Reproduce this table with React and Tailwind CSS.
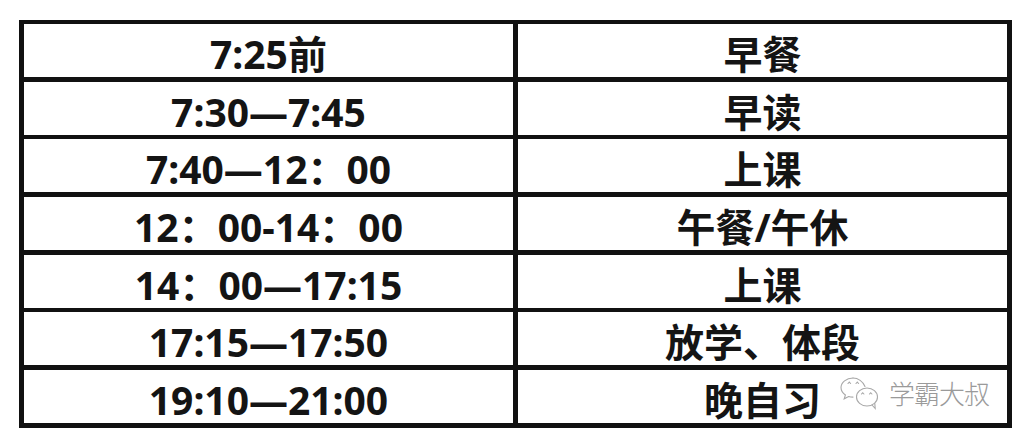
import React from "react";

const rows = [
  ["7:25前", "早餐"],
  ["7:30—7:45", "早读"],
  ["7:40—12：00", "上课"],
  ["12：00-14：00", "午餐/午休"],
  ["14：00—17:15", "上课"],
  ["17:15—17:50", "放学、体段"],
  ["19:10—21:00", "晚自习"],
];

function WeChatIcon() {
  return (
    <svg width="42" height="36" viewBox="0 0 42 36" fill="none" stroke="#a8a8a8" strokeWidth="1.1" strokeLinecap="round">
      <path d="M14 3c-6.6 0-12 4.3-12 9.6 0 3 1.7 5.6 4.4 7.4l-1.2 3.8 4.4-2.3c1.3.4 2.8.6 4.4.6" />
      <path d="M26 11.5c-1.9-5-7-8.5-12-8.5" />
      <path d="M9 8.5l1.3-1.4 1.3 1.4" />
      <path d="M17 8.5l1.3-1.4 1.3 1.4" />
      <ellipse cx="28" cy="22" rx="10.5" ry="9" />
      <path d="M33 30l3.2 3.5-0.4-5" />
      <path d="M22.5 19l1.2-1.3 1.2 1.3" />
      <path d="M30.5 19l1.2-1.3 1.2 1.3" />
    </svg>
  );
}

export default function App() {
  return (
    <div className="w-[1024px] h-[438px] bg-white pt-[20px] pl-[19px]">
      <div
        className="w-[993px] h-[408px] bg-[#111] grid grid-cols-[489px_489px] grid-rows-7 gap-x-[5px] gap-y-[4.6px] pt-[4px] pb-[5px] px-[5px]"
        style={{ fontFamily: '"Noto Sans", "Noto Sans CJK SC", sans-serif' }}
      >
        {rows.map(([t, a], i) => (
          <React.Fragment key={i}>
            <div className="bg-white flex items-center justify-center text-[39px] font-bold leading-none text-[#141414] pt-[6px]">
              {t}
            </div>
            <div className="bg-white relative flex items-center justify-center text-[39px] font-bold leading-none text-[#141414] pt-[6px]">
              {a}
              {i === 6 && (
                <div className="absolute right-[18px] top-[5px] flex items-center gap-[8px]">
                  <WeChatIcon />
                  <span
                    className="text-[26px] font-light text-[#9a9a9a] tracking-[-1px]"
                    style={{ fontFamily: '"Noto Sans CJK SC", sans-serif' }}
                  >
                    学霸大叔
                  </span>
                </div>
              )}
            </div>
          </React.Fragment>
        ))}
      </div>
    </div>
  );
}
